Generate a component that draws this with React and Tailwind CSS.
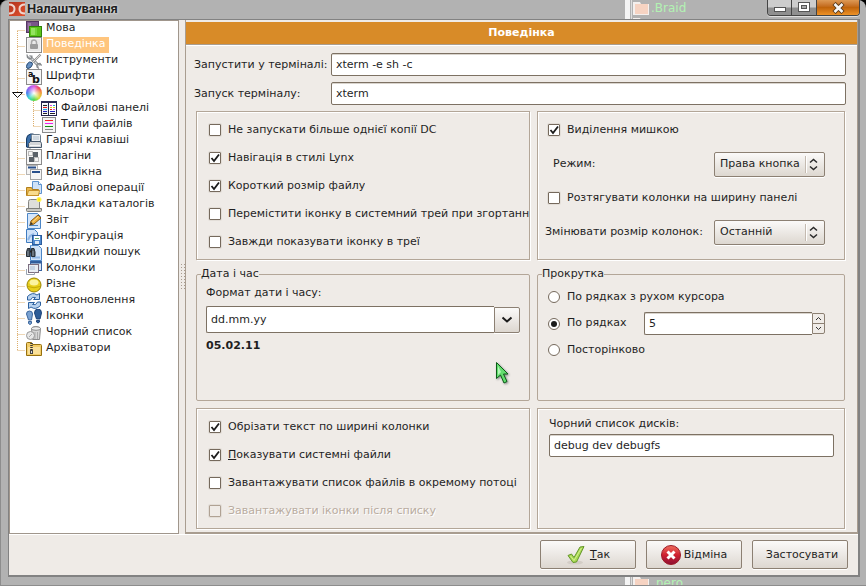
import React from "react";

const BoxedIcon = ({ children }) => (
  <>
    <rect x="0.5" y="0.5" width="15" height="15" fill="#f6f6f6" stroke="#8a8a8a" />
    {children}
  </>
);

const icons = {
  lang: (
    <>
      <rect x="0.5" y="0.5" width="12" height="11" fill="#7a5689" stroke="#553563" />
      <rect x="2" y="2" width="3" height="8" fill="#9878a6" />
      <rect x="3.500" y="5.500" width="12" height="10" fill="#5cc41a" stroke="#2f8208" />
      <rect x="5" y="7" width="4" height="7" fill="#93e35e" />
      <rect x="9" y="7" width="2" height="7" fill="#74d43a" />
    </>
  ),
  lock: (
    <BoxedIcon>
      <rect x="2" y="2" width="12" height="12" fill="#e9e9e9" />
      <path d="M5.500 8V5.500a2.500 2.500 0 0 1 5 0V8" fill="none" stroke="#a8a8a8" strokeWidth="1.500" />
      <rect x="4" y="7" width="8" height="5" rx="1" fill="#9b9b9b" />
    </BoxedIcon>
  ),
  tools: (
    <>
      <path d="M3 3l10 10" stroke="#7e8387" strokeWidth="3" />
      <path d="M3 3l10 10" stroke="#d5d8da" strokeWidth="1.400" />
      <path d="M1 1.500l.5 3 2 1.500 2-1 .5-2.500M11 11l3-.5 1.500 2M11 11v3l2 1.500" fill="none" stroke="#83878a" strokeWidth="1.300" />
      <path d="M14.500 1.500L7 9" stroke="#8c8c8c" strokeWidth="2.200" />
      <path d="M14.500 1.500L7 9" stroke="#eee" strokeWidth="0.800" />
      <path d="M0.500 13.500q0-3 3-4.500l2.500.5.5 2q-1.500 4-4.500 4-1.500 0-1.500-2z" fill="#6690c2" stroke="#24476f" />
    </>
  ),
  fonts: (
    <BoxedIcon>
      <text x="2" y="7.500" fontSize="8" fontWeight="bold" fill="#111">a</text>
      <text x="6" y="14" fontSize="11" fontWeight="bold" fill="#111">b</text>
    </BoxedIcon>
  ),
  panels: (
    <>
      <rect x="0.5" y="0.5" width="15" height="14" fill="#fff" stroke="#23234a" />
      <rect x="0" y="0" width="16" height="2" fill="#2b2b55" />
      <rect x="2" y="3" width="5" height="10" fill="#e9eef4" />
      <path d="M7.500 2v12" stroke="#23234a" />
      <path d="M2 4.500h4M2 12.500h4M9 12.500h5" stroke="#222" />
      <path d="M2 6.500h4M9 8.500h2" stroke="#e02020" />
      <path d="M2 8.500h4M12 4.500h2" stroke="#20a0e0" />
      <path d="M9 4.500h2M12 8.500h2" stroke="#e04ae0" />
      <path d="M9 6.500h2M12 6.500h2" stroke="#e0c820" />
      <path d="M2 10.500h4M9 10.500h5" stroke="#2020c0" />
    </>
  ),
  types: (
    <>
      <rect x="1.500" y="0.5" width="13" height="15" fill="#f4f4f4" stroke="#8a8a8a" />
      <path d="M4 3.500h8" stroke="#f02020" />
      <path d="M4 6.500h8" stroke="#f020f0" />
      <path d="M4 9.500h8" stroke="#109010" />
      <path d="M4 12.500h8" stroke="#888" />
    </>
  ),
  keys: (
    <>
      <path d="M0.500 14V6q0-4 4-5h3v4l-3 1v9z" fill="#3a6ea8" stroke="#173a63" />
      <rect x="5.500" y="1.500" width="9" height="8" rx="1" fill="#eceff2" stroke="#6d7d8c" />
      <rect x="7" y="3" width="6" height="4" fill="#cfd8e0" />
      <path d="M2.500 10.500l2-2h10l1 2v4h-13z" fill="#d4d6d8" stroke="#44566a" />
      <path d="M4 12.500h10" stroke="#f7f7f7" />
    </>
  ),
  plugins: (
    <BoxedIcon>
      <rect x="2.500" y="2.500" width="4" height="4" fill="#f4f4f4" stroke="#bbb" />
      <rect x="7" y="3" width="5" height="5" fill="#596067" />
      <rect x="3" y="8" width="5" height="5" fill="#596067" />
      <rect x="8.500" y="8.500" width="4" height="4" fill="#f4f4f4" stroke="#bbb" />
    </BoxedIcon>
  ),
  view: (
    <>
      <rect x="0.5" y="0.5" width="11" height="9" fill="#f4f4f4" stroke="#b5b5b5" />
      <path d="M2 2.500h8" stroke="#274f8c" strokeWidth="2" />
      <rect x="4.500" y="4.500" width="11" height="10" fill="#f4f4f4" stroke="#a2a2a2" />
      <path d="M6 7h8" stroke="#274f8c" strokeWidth="2" />
    </>
  ),
  fileops: (
    <>
      <path d="M6.500 0.500h6l3 3v9h-9z" fill="#cfe2f8" stroke="#5d93cf" />
      <path d="M12.500 0.500v3h3" fill="#fff" stroke="#5d93cf" />
      <path d="M0.500 14.500v-8h5l1 2h6v6z" fill="#e9b54a" stroke="#b07f1c" />
      <path d="M1 14.500l1.500-5h11l-1 5z" fill="#f9dc8e" stroke="#c8922a" />
    </>
  ),
  tabs: (
    <>
      <path d="M2.500 4.500q0-2 2-2h7q2 0 2 2v7h-11z" fill="#dededa" stroke="#868682" />
      <path d="M0.500 11.500h15v2q0 1-1 1h-13q-1 0-1-1z" fill="#c9c9c4" stroke="#7d7d79" />
      <circle cx="13" cy="2.500" r="2.500" fill="#fff45a" />
      <circle cx="13" cy="2.500" r="1.200" fill="#ffe600" />
    </>
  ),
  log: (
    <>
      <path d="M1.500 0.500h10l3 3v12h-13z" fill="#d5e6fa" stroke="#4c86c6" />
      <path d="M3 12.500h9" stroke="#4c86c6" />
      <path d="M4 12l1-4 7-6 3 3-7 6z" fill="#eeb040" stroke="#8a5a10" />
      <path d="M4 12l1-3 2 2z" fill="#333" />
      <path d="M6.500 9l6-5.500" stroke="#fbdc93" />
    </>
  ),
  config: (
    <>
      <path d="M0.500 0.500h8l3 3v10h-11z" fill="#cfe2f8" stroke="#3f7cc0" />
      <path d="M2 11l2-4 4-2" fill="none" stroke="#8fb6e4" strokeWidth="2" />
      <rect x="6.500" y="6.500" width="9" height="9" fill="#4f8ad0" stroke="#2b5c9c" />
      <rect x="8" y="7" width="6" height="4" fill="#fff" />
      <path d="M9 9.500h4" stroke="#70b070" />
      <rect x="9" y="12" width="4" height="3" fill="#dce8f6" />
    </>
  ),
  search: (
    <>
      <path d="M5.500 0.500h7l3 3v12h-11v-15z" fill="#cfe2f8" stroke="#4c86c6" />
      <path d="M6 12.500h8" stroke="#8fb6e4" strokeWidth="2" />
      <path d="M0.500 11.500V7l1-3.500h2.500v8zM5.500 11.500v-8H8l1 3.500v4.500z" fill="#4a545e" stroke="#262e36" />
      <path d="M4 6.500h2" stroke="#222" strokeWidth="2" />
      <path d="M2 6v5M7 6v5" stroke="#8794a0" />
    </>
  ),
  columns: (
    <>
      <rect x="4.500" y="0.500" width="11" height="9" fill="#dbe7f5" stroke="#3a64a2" />
      <path d="M5 1.500h10" stroke="#2f5c9b" strokeWidth="2" />
      <rect x="2.500" y="3.500" width="10" height="8" fill="#e9edf2" stroke="#7c6f80" />
      <rect x="4" y="5" width="5" height="4" fill="#c7d4e4" />
      <path d="M0.500 8v5.500h8v-2" fill="none" stroke="#9aa4b0" />
    </>
  ),
  misc: (
    <>
      <circle cx="8" cy="8" r="7" fill="#e8cf1c" stroke="#9a8400" />
      <ellipse cx="8" cy="5.500" rx="4.500" ry="3" fill="#fbf3a0" />
      <path d="M2 9.500q6 2.500 12 0" fill="none" stroke="#c4aa08" />
    </>
  ),
  refresh: (
    <>
      <path d="M1.500 7V3.500q5-5 9.500-1.500l2.500-1.500v6h-6l2-2Q6 3 4.500 7z" fill="#b9d3ef" stroke="#2d619f" />
      <path d="M14.500 9v3.500q-5 5-9.500 1.500l-2.500 1.500v-6h6l-2 2Q10 13 11.500 9z" fill="#b9d3ef" stroke="#2d619f" />
    </>
  ),
  feet: (
    <>
      <path d="M0.500 5q0-3 3-3t3 3l-1 6H2.500zM2.500 12.500h3v2q-1.500 2-3 0z" fill="#7aa2d2" stroke="#3c669c" />
      <path d="M8.500 4q0-4 3.500-4t3.500 4l-1.500 6h-3.500zM10.500 11.500h3v1.500q-1.500 2-3 0z" fill="#2e5d98" stroke="#1d4277" />
    </>
  ),
  trash: (
    <>
      <path d="M5.500 3.500q4-4 9 0l-1 11h-7z" fill="#d6d6d6" stroke="#8c8c8c" />
      <ellipse cx="10" cy="3.500" rx="4.500" ry="1.800" fill="#efefef" stroke="#8c8c8c" />
      <path d="M9 7v7M11.500 7v7" stroke="#aaa" />
      <circle cx="4.500" cy="10.500" r="4" fill="#e6e6e6" stroke="#989898" />
      <path d="M3 12l3-3" stroke="#aaa" />
    </>
  ),
  archive: (
    <>
      <path d="M0.500 14.500v-12q0-1 1-1h4l1 2h8q1 0 1 1v10z" fill="#f2cd6a" stroke="#96700f" />
      <path d="M2 6h12v7H2z" fill="#f9e09a" />
      <path d="M5.500 2v8" stroke="#333" strokeWidth="2.500" strokeDasharray="1 1" />
      <rect x="4.500" y="9.500" width="2" height="3" fill="#ddd" stroke="#444" />
    </>
  ),
};

const tree = [
  ["lang", "Мова"],
  ["lock", "Поведінка"],
  ["tools", "Інструменти"],
  ["fonts", "Шрифти"],
  ["colors", "Кольори"],
  ["panels", "Файлові панелі", 1],
  ["types", "Типи файлів", 2],
  ["keys", "Гарячі клавіші"],
  ["plugins", "Плагіни"],
  ["view", "Вид вікна"],
  ["fileops", "Файлові операції"],
  ["tabs", "Вкладки каталогів"],
  ["log", "Звіт"],
  ["config", "Конфігурація"],
  ["search", "Швидкий пошук"],
  ["columns", "Колонки"],
  ["misc", "Різне"],
  ["refresh", "Автооновлення"],
  ["feet", "Іконки"],
  ["trash", "Чорний список"],
  ["archive", "Архіватори"],
];

function Connector({ nested, first, last, open }) {
  const w = nested ? 29 : 14;
  const x = nested ? 21.5 : 5.5;
  return (
    <svg width={w} height="16" className="shrink-0" fill="none" stroke="#dcae6c" strokeDasharray="1 1">
      <path d={`M5.500 ${first ? 10 : 0}V${last ? 10 : 16}`} />
      {nested && <path d={`M${x} 0V${nested === 2 ? 10 : 16}`} />}
      <path d={`M${x} 9.500h7`} />
      {open && <path d="M0.500 7.500h10l-5 5z" fill="#fff" stroke="#111" strokeDasharray="none" />}
    </svg>
  );
}

function TreeRow({ item, index }) {
  const [icon, label, nested] = item;
  const selected = index === 1;
  return (
    <li className="flex h-4 items-center">
      <Connector nested={nested} first={index === 0} last={index === tree.length - 1} open={icon === "colors"} />
      {icon === "colors" ? (
        <span className="size-4 shrink-0 rounded-full bg-[radial-gradient(circle,#fff_0%,transparent_60%),conic-gradient(#d95ce8,#f04a5a,#f0a03c,#d8e040,#4fd84f,#3fd8d0,#4a80f0,#9a5cf0,#d95ce8)]" />
      ) : (
        <svg width="16" height="16" viewBox="0 0 16 16" className="shrink-0">{icons[icon]}</svg>
      )}
      <a
        href={`#${icon}`}
        className={`ml-px h-4 px-[3px] leading-[14px] whitespace-nowrap ${selected ? "bg-[#ffc57d] text-white" : ""}`}
      >
        {label}
      </a>
    </li>
  );
}

const inputBase =
  "h-[23px] min-w-0 border border-[#7d7163] bg-white px-1 leading-[14px] shadow-[inset_0_1px_0_#d9d4cd] outline-none";
const raised = "border border-[#8c8073] bg-linear-to-b from-[#fbfaf9] to-[#ddd7d0] shadow-[0_1px_0_#fff]";
const box = "border border-[#b3a698] shadow-[1px_1px_0_#fff,inset_1px_1px_0_#fff]";

function Check({ children, checked, disabled }) {
  return (
    <label className={`flex h-7 items-center ${disabled ? "text-[#b9aca0] [text-shadow:1px_1px_0_#fff]" : ""}`}>
      <span className="grid size-3 shrink-0 place-items-center">
        <input
          type="checkbox"
          defaultChecked={checked}
          disabled={disabled}
          className="peer col-start-1 row-start-1 size-3 appearance-none rounded-[1px] border border-[#75695c] bg-white shadow-[0_0_0_1px_#e3ded8] disabled:border-[#b0a294] disabled:bg-[#efebe7]"
        />
        <svg width="12" height="12" viewBox="0 0 12 12" className="pointer-events-none invisible z-10 col-start-1 row-start-1 peer-checked:visible">
          <path d="M2.500 6l2.500 3 5-6.500" fill="none" stroke="#1c1c1c" strokeWidth="1.800" />
        </svg>
      </span>
      <span className="ml-[7px] min-w-0 overflow-hidden pb-px whitespace-nowrap">{children}</span>
    </label>
  );
}

function Radio({ children, checked }) {
  return (
    <label className="flex h-[26px] items-center">
      <span className="grid size-3 shrink-0 place-items-center">
        <input
          type="radio"
          name="scroll"
          defaultChecked={checked}
          className="peer col-start-1 row-start-1 size-3 appearance-none rounded-full border border-[#75695c] bg-white"
        />
        <span className="pointer-events-none invisible z-10 col-start-1 row-start-1 size-1.5 rounded-full bg-[#1c1c1c] peer-checked:visible" />
      </span>
      <span className="ml-[7px] pb-px whitespace-nowrap">{children}</span>
    </label>
  );
}

function SelectRow({ id, label, value, className }) {
  return (
    <div className={`flex items-center justify-between pr-[11px] ${className}`}>
      <label htmlFor={id} className="whitespace-nowrap">{label}</label>
      <div className="relative">
        <select id={id} className={`h-[25px] w-[111px] appearance-none rounded-[2px] pl-[5px] ${raised}`}>
          <option>{value}</option>
        </select>
        <svg width="20" height="19" className="pointer-events-none absolute top-[3px] right-0" fill="none">
          <path d="M0.500 1v17" stroke="#c4bab0" />
          <path d="M1.500 1v17" stroke="#fff" />
          <path d="M5 7.500l3.500-3 3.500 3M5 11.500l3.500 3 3.500-3" stroke="#2a2a2a" strokeWidth="1.500" />
        </svg>
      </div>
    </div>
  );
}

function DimFolder() {
  return (
    <svg width="17" height="14" className="shrink-0">
      <path d="M1 1h7l1 2h8v11H1z" fill="#f4f0ee" />
      <rect x="3" y="3" width="13" height="10" fill="#f6d3c2" />
    </svg>
  );
}

const winButton = "grid h-full place-items-center border-r border-[#444] bg-linear-to-b from-[#cdcdcd] from-45% to-[#8f8f8f] to-55%";

export default function App() {
  return (
    <div className="min-h-screen bg-black font-['DejaVu_Sans','Noto_Sans',sans-serif] text-[11px] leading-[14px] text-[#1f1f1f]">
      <div className="relative flex min-h-screen flex-col overflow-hidden rounded-t-lg border-b border-l border-[#8d8d8d] bg-[#b2b2b2] pr-1.5 pb-2 pl-[7px]">
        {/* file list showing through the translucent frame */}
        <div className="absolute inset-y-0 left-[624px] flex flex-col justify-between border-l-[5px] border-[#f4f4f4] pl-px text-[12px] text-[#b2f2b2]" aria-hidden="true">
          <div>
            <div className="flex h-4 items-center gap-0.5 border-l border-[#ddd]"><DimFolder /><span>.Braid</span></div>
            <div className="flex h-4 items-center gap-1 border-l border-[#ddd]"><DimFolder /></div>
          </div>
          <div className="-mb-1 flex h-3 items-center gap-[7px] border-l border-[#ddd]"><DimFolder /><span>nero</span></div>
        </div>

        <header className="relative flex h-[19px] shrink-0 items-start">
          <svg width="17" height="15" className="mt-0.5" fill="none">
            <defs>
              <linearGradient id="logo" x2="1" y2="1">
                <stop stopColor="#b1321c" />
                <stop offset="1" stopColor="#e0512e" />
              </linearGradient>
            </defs>
            <rect x="1" width="16" height="14" fill="url(#logo)" />
            <path d="M1 2.500q5.500 0 5.500 4.500t-5.500 4.500M17 2.500q-5.500 0-5.500 4.500t5.500 4.500" stroke="#f0d4cc" strokeWidth="2" />
          </svg>
          <h1 className="ml-0.5 font-['Roboto',sans-serif] text-[13px] leading-[17px] font-bold [text-shadow:0_0_3px_#fff]">Налаштування</h1>
          <div className="ml-auto flex h-4 w-[93px] overflow-hidden rounded-b-[4px] border border-t-0 border-[#444] shadow-[0_1px_0_#ddd]">
            <button aria-label="Згорнути" className={`${winButton} w-6`}>
              <svg width="12" height="6" className="mt-1"><rect x="0.500" y="0.500" width="11" height="4" fill="#fff" stroke="#555" /></svg>
            </button>
            <button aria-label="Розгорнути" className={`${winButton} w-[25px]`}>
              <svg width="12" height="11" fill="none"><rect x="0.500" y="0.500" width="11" height="9" fill="#fff" stroke="#555" /><rect x="3.500" y="3.500" width="5" height="3" fill="#aaa" stroke="#555" /></svg>
            </button>
            <button aria-label="Закрити" className="grid h-full flex-1 place-items-center bg-linear-to-b from-[#dd9a55] via-[#c0640a] via-50% to-[#ee9226]">
              <svg width="13" height="12" fill="none"><path d="M2 1.500l9 9M11 1.500l-9 9" stroke="#5a3a1a" strokeWidth="4.500" /><path d="M2.500 2l8 8M10.500 2l-8 8" stroke="#f6f6f6" strokeWidth="2.500" /></svg>
            </button>
          </div>
        </header>

        <div className="relative flex flex-1 flex-col border-t border-r-2 border-b-2 border-l border-[#828282] bg-[#efebe7]">
          <div className="flex">
            <nav className="w-[170px] shrink-0 border border-[#a0968c] bg-white pl-0.5">
              <ul>
                {tree.map((item, i) => <TreeRow key={item[1]} item={item} index={i} />)}
              </ul>
            </nav>
            <div className="grid w-1.5 shrink-0 place-items-center">
              <span className="h-7 w-[5px] bg-[radial-gradient(#a89c90_35%,transparent_40%)] bg-size-[3px_3px]" />
            </div>

            <main className="min-w-0 flex-1 border-r border-b-2 border-l border-[#a99d90]">
              <h2 className="mt-0.5 h-[22px] bg-[#d88b28] text-center leading-[21px] font-bold text-white">Поведінка</h2>
              <div className="border-t border-[#a99d90] pr-[11px] pb-[3px] pl-2 shadow-[inset_0_1px_0_#fff]">
                <div className="grid grid-cols-[137px_1fr] items-center gap-y-1.5 pt-2">
                  <label htmlFor="run">Запустити у терміналі:</label>
                  <input id="run" defaultValue="xterm -e sh -c" className={`${inputBase} rounded-[2px]`} />
                  <label htmlFor="term">Запуск терміналу:</label>
                  <input id="term" defaultValue="xterm" className={`${inputBase} rounded-[2px]`} />
                </div>

                <div className="mt-1.5 mr-px ml-0.5 grid grid-cols-[334fr_308fr] gap-[7px]">
                  <div className={`${box} min-w-0 pt-1 pb-[3px] pl-3`}>
                    <Check>Не запускати більше однієї копії DC</Check>
                    <Check checked>Навігація в стилі Lynx</Check>
                    <Check checked>Короткий розмір файлу</Check>
                    <Check>Перемістити іконку в системний трей при згортанн</Check>
                    <Check>Завжди показувати іконку в треї</Check>
                  </div>
                  <div className={`${box} min-w-0 pt-1 pr-2 pl-[10px]`}>
                    <Check checked>Виділення мишкою</Check>
                    <SelectRow id="mode" label="Режим:" value="Права кнопка" className="h-10 pl-[5px]" />
                    <Check>Розтягувати колонки на ширину панелі</Check>
                    <SelectRow id="resize" label="Змінювати розмір колонок:" value="Останній" className="-ml-[3px] h-10" />
                  </div>

                  <fieldset className="h-[134px] min-w-0 rounded-[2px] border border-[#b3a698] pr-[9px] pl-[9px]">
                    <legend className="-ml-[5px] leading-[14px]">Дата і час</legend>
                    <label htmlFor="fmt" className="mt-[5px] block">Формат дати і часу:</label>
                    <div className="mt-1.5 flex items-center">
                      <input id="fmt" defaultValue="dd.mm.yy" className="h-[27px] min-w-0 flex-1 rounded-l-[2px] border border-r-0 border-[#7d7163] bg-white px-1 outline-none" />
                      <button aria-label="Вибрати формат" className={`grid h-[26px] w-[26px] place-items-center rounded-r-[2px] ${raised}`}>
                        <svg width="12" height="8" fill="none"><path d="M1.500 1.500l4.500 4 4.500-4" stroke="#1c1c1c" strokeWidth="2" /></svg>
                      </button>
                    </div>
                    <output className="mt-1.5 block font-bold">05.02.11</output>
                  </fieldset>
                  <fieldset className="h-[134px] min-w-0 rounded-[2px] border border-[#b3a698] pr-[19px] pl-[10px]">
                    <legend className="-ml-1.5 leading-[14px]">Прокрутка</legend>
                    <div className="pt-[3px]">
                      <Radio>По рядках з рухом курсора</Radio>
                      <div className="flex h-[27px] items-center">
                        <div className="w-24 shrink-0"><Radio checked>По рядках</Radio></div>
                        <input aria-label="Кількість рядків" defaultValue="5" className={`${inputBase} flex-1 rounded-l-[2px] border-r-0`} />
                        <div className="flex h-[21px] w-[13px] flex-col overflow-hidden rounded-r-[2px] border border-[#8c8073] bg-[#f0ece8]">
                          <button aria-label="Більше" className="grid flex-1 place-items-center border-b border-[#8c8073]">
                            <svg width="7" height="5" fill="none"><path d="M1 4l2.500-2.500L6 4" stroke="#333" /></svg>
                          </button>
                          <button aria-label="Менше" className="grid flex-1 place-items-center">
                            <svg width="7" height="5" fill="none"><path d="M1 1l2.500 2.500L6 1" stroke="#333" /></svg>
                          </button>
                        </div>
                      </div>
                      <Radio>Посторінково</Radio>
                    </div>
                  </fieldset>

                  <div className={`${box} min-w-0 pt-1 pb-[3px] pl-3`}>
                    <Check checked>Обрізати текст по ширині колонки</Check>
                    <Check checked><span className="underline">П</span>оказувати системні файли</Check>
                    <Check>Завантажувати список файлів в окремому потоці</Check>
                    <Check disabled>Завантажувати іконки після списку</Check>
                  </div>
                  <div className={`${box} flex min-w-0 flex-col pt-2 pr-[10px] pl-[11px]`}>
                    <label htmlFor="black">Чорний список дисків:</label>
                    <input id="black" defaultValue="debug dev debugfs" className={`${inputBase} mt-[3px] rounded-[2px]`} />
                  </div>
                </div>
              </div>
            </main>
          </div>

          <footer className="flex flex-1 items-start justify-end gap-[10px] border-t border-white pt-[5px] pr-[10px] pb-1">
            <button className={`flex h-[29px] w-24 items-center justify-center gap-1 rounded-[2px] ${raised}`}>
              <svg width="20" height="20" viewBox="0 0 20 20">
                <ellipse cx="9" cy="17.500" rx="8" ry="2" fill="#d3cdc6" />
                <path d="M2 10.500l3.500-1.500 2.500 3.500 6-10.500 4-.5-7.500 15.500-3.500.5z" fill="#a9da54" stroke="#64962a" />
                <path d="M4.500 11l3.500 4.500 7.500-12.500" fill="none" stroke="#d4f08e" />
              </svg>
              <span><span className="underline">Т</span>ак</span>
            </button>
            <button className={`flex h-[29px] w-24 items-center justify-center gap-[3px] rounded-[2px] ${raised}`}>
              <svg width="20" height="20" viewBox="0 0 20 20">
                <defs>
                  <linearGradient id="stop" x2="0" y2="1">
                    <stop stopColor="#f0705e" />
                    <stop offset="0.500" stopColor="#cf2030" />
                    <stop offset="1" stopColor="#8c1034" />
                  </linearGradient>
                </defs>
                <circle cx="10" cy="10" r="9.500" fill="url(#stop)" stroke="#9c1a26" />
                <path d="M6.500 6.500l7 7M13.500 6.500l-7 7" stroke="#fff" strokeWidth="3" />
              </svg>
              <span>Відміна</span>
            </button>
            <button className={`h-[29px] w-24 rounded-[2px] pl-1 ${raised}`}>Застосувати</button>
          </footer>
        </div>

        {/* mouse pointer */}
        <svg width="16" height="24" className="pointer-events-none absolute top-[361px] left-[494px] drop-shadow-[1px_1px_1px_#888]">
          <path d="M1.500 1.500v16l4-3.500 3.500 8 3-1.500-3.500-7.500h4.500z" fill="#63dd6e" stroke="#0c5c18" />
          <path d="M3 5v9l3-3z" fill="#b5f5b8" />
        </svg>
      </div>
    </div>
  );
}
